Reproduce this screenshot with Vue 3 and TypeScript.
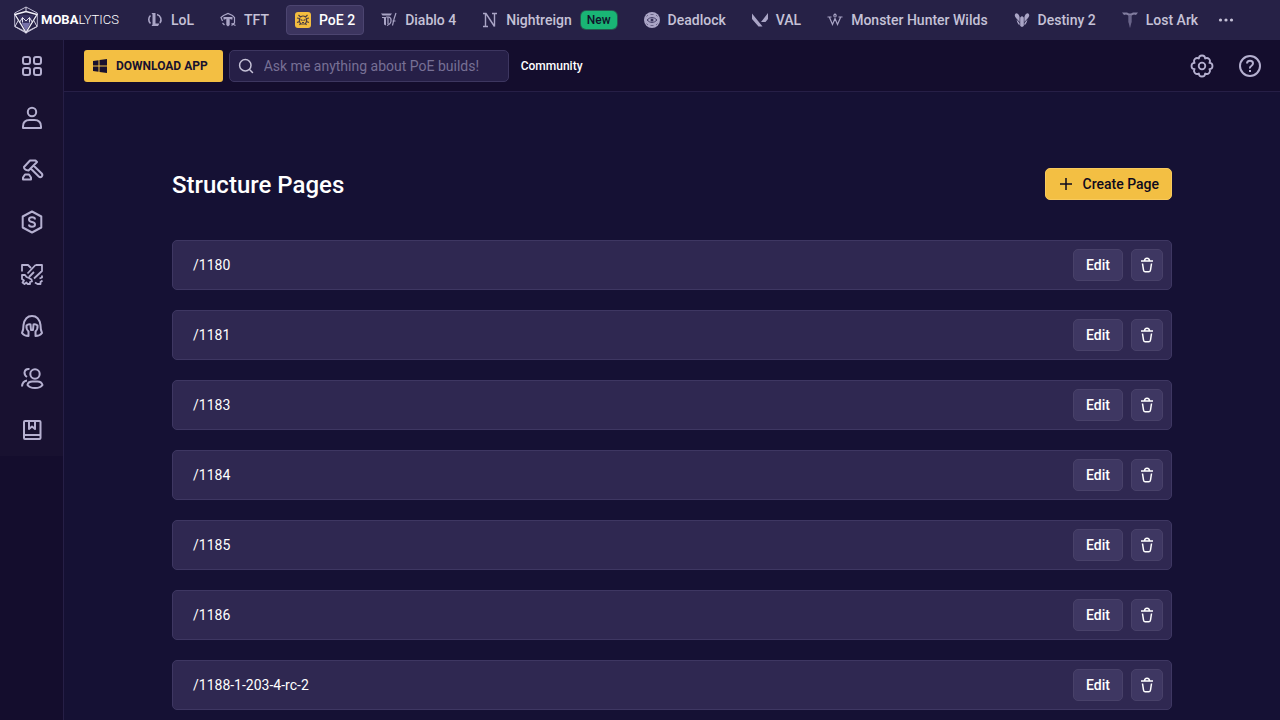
<script setup lang="ts">
import { ref } from 'vue'

interface Game {
  id: string
  name: string
  active?: boolean
  badge?: string
}

const games: Game[] = [
  { id: 'lol', name: 'LoL' },
  { id: 'tft', name: 'TFT' },
  { id: 'poe', name: 'PoE 2', active: true },
  { id: 'diablo', name: 'Diablo 4' },
  { id: 'night', name: 'Nightreign', badge: 'New' },
  { id: 'deadlock', name: 'Deadlock' },
  { id: 'val', name: 'VAL' },
  { id: 'mhw', name: 'Monster Hunter Wilds' },
  { id: 'destiny', name: 'Destiny 2' },
  { id: 'ark', name: 'Lost Ark' },
]

const sections: string[] = ['Dashboard', 'Profile', 'Builds', 'Currency', 'Gear', 'Classes', 'Community', 'Guides']

const pages: string[] = ['/1180', '/1181', '/1183', '/1184', '/1185', '/1186', '/1188-1-203-4-rc-2']

const query = ref('')
</script>

<template>
  <div class="app">
    <header class="games-bar">
      <a class="logo" href="#" aria-label="Mobalytics">
        <svg class="logo-mark" viewBox="0 0 26 28" aria-hidden="true">
          <path d="M5 9H21L13 25Z" fill="#37325f" />
          <path d="M8.500 17H17.500L13 25Z" fill="#7671a8" />
          <path d="M13 1 24.300 7V20.500L13 27 1.700 20.500V7Z" fill="none" stroke="#bbb7d0" stroke-width="1" />
          <path d="M2 8.500 13 5.500 24 8.500 13 26.500Z" fill="none" stroke="#f4f3fa" stroke-width="1.300" />
          <path d="M13 1V5.500M2 20.500 5.500 14M24 20.500 20.500 14M2 20.500 13 26M24 20.500 13 26" fill="none" stroke="#d9d7e6" stroke-width="1" />
          <path d="M9.500 16.500V11.500L13 15 16.500 11.500V16.500M6.500 16.500 9.500 11.500M19.500 16.500 16.500 11.500" fill="none" stroke="#dfddec" stroke-width="1" />
        </svg>
        <span class="wordmark"><b>MOBA</b>LYTICS</span>
      </a>
      <nav class="games" aria-label="Games">
        <a v-for="g in games" :key="g.id" href="#" class="game" :class="{ active: g.active }">
          <svg class="game-icon" viewBox="0 0 16 16" fill="none" stroke="currentColor" aria-hidden="true">
            <g v-if="g.id === 'lol'">
              <path d="M4.500 1H8.500V11.500H12.500L11 14H4.500L5.500 12.500V2.500Z" fill="currentColor" stroke="none" />
              <path d="M10 2.500A5.500 5.500 0 0 1 13 11M3.500 3.500A5.500 5.500 0 0 0 3.500 11.500" stroke-width="1.600" />
            </g>
            <g v-else-if="g.id === 'tft'">
              <path d="M3.500 5H12.500V7.500H11L9.700 6.800V13L8 14.500 6.300 13V6.800L5 7.500H3.500Z" fill="currentColor" stroke="none" />
              <path d="M2.500 9 1 5.500 3.500 3.500 8 1.500 12.500 3.500 14.500 5.500V11L11.500 13.500M4.500 13 2.500 11M11.500 11.500 15.500 13.500" stroke-width="1.200" />
            </g>
            <g v-else-if="g.id === 'poe'">
              <rect width="16" height="16" rx="3" fill="#f4bd3f" stroke="none" />
              <g stroke="#4a3c43" stroke-width="1.200">
                <path d="M5.500 5Q8 3 10.500 5L12.500 3M5.500 5 3.500 3M4.500 6.500 2 6M11.500 6.500 14 6M4.500 9.500 2 10.500M11.500 9.500 14 10.500M5.500 11.500 4.500 13M10.500 11.500 11.500 13M4.800 6Q3.500 9.500 6 12H10Q12.500 9.500 11.200 6" />
                <path d="M5.500 7.500 7.500 8.500M10.500 7.500 8.500 8.500M7 10.500H9" />
              </g>
            </g>
            <g v-else-if="g.id === 'diablo'">
              <path d="M0 1.500H11L9.500 3.500H1.500ZM2.500 5H5V13.500L3 12.500V7Z" fill="currentColor" stroke="none" />
              <path d="M5 5H8Q10.500 6 10 9Q9.800 12 6 13.500M7 5V12M15 1Q13 6 11.500 13.500M1 5.500H4M11.500 9H14.500" stroke-width="1.200" />
            </g>
            <g v-else-if="g.id === 'night'">
              <path d="M1 1.500H4L12.500 14.500M3.500 2V14M12.500 2V14.500M10 1.500H15M1 14.500H6" stroke-width="1.400" />
            </g>
            <g v-else-if="g.id === 'deadlock'">
              <circle cx="8" cy="8" r="8" fill="currentColor" stroke="none" />
              <path d="M3 8Q8 3 13 8Q8 13 3 8Z" stroke="#443e66" />
              <circle cx="8" cy="8" r="1.500" fill="#373158" stroke="none" />
              <path d="M6.500 2.500H9.500M6.500 13.500H9.500M2.500 4.500 4 3M13.500 4.500 12 3M2.500 11.500 4 13M13.500 11.500 12 13" stroke="#6b6589" />
            </g>
            <g v-else-if="g.id === 'val'" fill="currentColor" stroke="none">
              <path d="M0 1.500 10.500 14.500H6.500L0 7ZM16 1V7L13.500 10H9Z" />
            </g>
            <g v-else-if="g.id === 'mhw'">
              <path d="M0.500 5H4.500M11.500 5H15.500M2.500 5.500 5.500 12.500 8 6.500 10.500 12.500 13.500 5.500M7.500 5Q6 3.200 8 2Q10 3.200 8.500 5" stroke-width="1.200" />
            </g>
            <g v-else-if="g.id === 'destiny'" fill="currentColor" stroke="none">
              <path d="M2 1.200Q-0.500 3 2 6L5.600 10V5Q4.800 1.500 2 1.200ZM14 1.200Q16.500 3 14 6L10.400 10V5Q11.200 1.500 14 1.200ZM6.200 5.500 8 4 9.800 5.500V14L8 15 6.200 14ZM2.500 7.500 5.600 11V13.300Q3.500 12 2.500 7.500ZM13.500 7.500 10.400 11V13.300Q12.500 12 13.500 7.500Z" />
            </g>
            <g v-else>
              <path d="M0 0.500H5L7 1.500H9L11 0.500H16L14 3 12 2.500 9.500 3.500V10L8 16 6.500 10V3.500L4 2.500 2 3Z" fill="currentColor" stroke="none" opacity="0.700" />
              <path d="M8 3V15" stroke="#3d3860" stroke-width="0.700" />
            </g>
          </svg>
          <span>{{ g.name }}</span>
          <span v-if="g.badge" class="badge">{{ g.badge }}</span>
        </a>
        <button class="more" type="button" aria-label="More games">
          <svg viewBox="0 0 16 16" fill="currentColor" aria-hidden="true">
            <circle cx="2.500" cy="8" r="1.600" /><circle cx="8" cy="8" r="1.600" /><circle cx="13.500" cy="8" r="1.600" />
          </svg>
        </button>
      </nav>
    </header>

    <div class="body">
      <aside class="sidebar">
        <nav class="sections" aria-label="Sections">
          <a v-for="s in sections" :key="s" href="#" class="section" :aria-label="s">
            <svg viewBox="0 0 24 24" fill="none" stroke="currentColor" stroke-width="2" stroke-linejoin="round" aria-hidden="true">
              <g v-if="s === 'Dashboard'">
                <rect x="3" y="3" width="7" height="7" rx="2" /><rect x="14" y="3" width="7" height="7" rx="2" />
                <rect x="3" y="14" width="7" height="7" rx="2" /><rect x="14" y="14" width="7" height="7" rx="2" />
              </g>
              <g v-else-if="s === 'Profile'">
                <circle cx="12" cy="6" r="4.200" />
                <path d="M3 22V20.500Q3 14 9.500 14H14.500Q21 14 21 20.500V22Z" />
              </g>
              <g v-else-if="s === 'Builds'">
                <path d="M4 9 10 2.500H15.500L17 4 8.500 12.500Q4 12 4 9ZM13.500 7.500 21.700 15.500Q23 17 21.700 18.500Q20.300 20 18.800 18.500L11 10.800M3 21.500V19.500L5 16.500H9L11 19.500V21.500Z" />
              </g>
              <g v-else-if="s === 'Currency'">
                <path d="M12 1.500 21.300 6.500V17.500L12 22.500 2.700 17.500V6.500Z" />
                <path d="M15 9.500Q15 7.300 12 7.300T9 9.500Q9 11.500 12 12T15 14.500Q15 16.700 12 16.700T9 14.500" />
              </g>
              <g v-else-if="s === 'Gear'" stroke-width="1.800">
                <path d="M2 9.500V3H8L11 6M15.500 3H22V9L14 16.500M15.500 3 7.500 11.500M14 10 9 15M2 13H5L6.500 15 9 16 11.500 17.500 12 19.500 10 20V22H7.500L6.500 20.500 4.500 22 2.500 20.500 4 18.500 2 17ZM22 13.500V15.500L19.500 16.500M22.500 18.500 20.500 20V22H17.500L15 20.500" />
              </g>
              <g v-else-if="s === 'Classes'">
                <path d="M2 19Q3.500 16 3.500 11Q5 2 12 2T20.500 11Q20.500 16 22 19Q20 22 15.500 22V17.500Q18 15 17.500 11.500Q15.500 9.500 13.500 10.500L13 16H11L10.500 10.500Q8.500 9.500 6.500 11.500Q6 15 8.500 17.500V22Q4 22 2 19Z" />
              </g>
              <g v-else-if="s === 'Community'">
                <circle cx="15" cy="8" r="4.700" />
                <path d="M7.500 19Q8 15.500 12.500 15.500H17.500Q21.500 15.500 22.500 19Q20.500 22 15 22T7.500 19ZM9.500 3Q5 2.500 4.500 6.500Q4.500 9.500 7 11M7 14.500Q2.500 15 2 20.500" />
              </g>
              <g v-else>
                <rect x="4" y="3" width="16.500" height="18" rx="1" />
                <path d="M4 17H20.500M9 3V11L12 8.500 15 11V3" />
              </g>
            </svg>
          </a>
        </nav>
      </aside>

      <div class="content">
        <div class="toolbar">
          <button class="download" type="button">
            <svg viewBox="0 0 14 14" fill="currentColor" aria-hidden="true">
              <path d="M0 2 5.500 1.200V6.500H0ZM6.500 1 14 0V6.500H6.500ZM0 7.500H5.500V12.800L0 12ZM6.500 7.500H14V14L6.500 13Z" />
            </svg>
            <span>DOWNLOAD APP</span>
          </button>
          <label class="search">
            <svg viewBox="0 0 16 16" fill="none" stroke="currentColor" stroke-width="1.500" stroke-linecap="round" aria-hidden="true">
              <circle cx="7.300" cy="7.300" r="5.700" /><path d="M11.500 11.500 14.500 14.500" />
            </svg>
            <input v-model="query" type="text" aria-label="Search" placeholder="Ask me anything about PoE builds!" />
          </label>
          <a class="community" href="#">Community</a>
          <div class="tools">
            <button class="tool" type="button" aria-label="Settings">
              <svg viewBox="0 0 24 24" fill="none" stroke="currentColor" stroke-width="1.800" stroke-linejoin="round" aria-hidden="true">
                <path d="M8.900 4.600A3.100 3.100 0 0 1 15.100 4.600A3.100 3.100 0 0 1 19.400 8.900A3.100 3.100 0 0 1 19.400 15.100A3.100 3.100 0 0 1 15.100 19.400A3.100 3.100 0 0 1 8.900 19.400A3.100 3.100 0 0 1 4.600 15.100A3.100 3.100 0 0 1 4.600 8.900A3.100 3.100 0 0 1 8.900 4.600Z" />
                <circle cx="12" cy="12" r="3.300" />
              </svg>
            </button>
            <button class="tool" type="button" aria-label="Help">
              <svg viewBox="0 0 24 24" fill="none" stroke="currentColor" stroke-width="2" aria-hidden="true">
                <circle cx="12" cy="12" r="10" />
                <path d="M9 9.500Q9 6.700 12 6.700T15 9.300Q15 11 13.300 12T12 14.500M12 16V18" />
              </svg>
            </button>
          </div>
        </div>

        <main class="main">
          <div class="container">
            <div class="heading">
              <h1>Structure Pages</h1>
              <button class="create" type="button">
                <svg viewBox="0 0 16 16" fill="none" stroke="currentColor" stroke-width="1.500" aria-hidden="true">
                  <path d="M8 2V14M2 8H14" />
                </svg>
                <span>Create Page</span>
              </button>
            </div>
            <ul class="pages">
              <li v-for="p in pages" :key="p" class="page">
                <span class="path">{{ p }}</span>
                <button class="btn edit" type="button">Edit</button>
                <button class="btn remove" type="button" :aria-label="`Delete ${p}`">
                  <svg viewBox="0 0 16 16" fill="none" stroke="currentColor" stroke-width="1.500" stroke-linejoin="round" aria-hidden="true">
                    <path d="M2 4H14M5.500 4Q5.500 1.200 8 1.200T10.500 4M3.500 6.500 4.500 13Q4.700 14.800 6 14.800H10Q11.300 14.800 11.500 13L12.500 6.500" />
                  </svg>
                </button>
              </li>
            </ul>
          </div>
        </main>
      </div>
    </div>
  </div>
</template>

<style>
body {
  margin: 0;
  background: #151134;
}
</style>

<style scoped>
.app {
  min-height: 100vh;
  display: flex;
  flex-direction: column;
  font-family: Roboto, "Liberation Sans", sans-serif;
  font-size: 14px;
  line-height: 20px;
  color: #fff;
}
.app *, .app { box-sizing: border-box; }
a { color: inherit; text-decoration: none; }
button, input { font: inherit; color: inherit; }
button { cursor: pointer; }
svg { display: block; flex: none; }

.games-bar {
  height: 40px;
  display: flex;
  align-items: center;
  padding-left: 13px;
  background: #262146;
}
.logo {
  display: flex;
  align-items: center;
  width: 125px;
  flex: none;
}
.logo-mark { width: 26px; height: 28px; }
.wordmark { margin-left: 2px; font-size: 13px; font-weight: 300; }
.wordmark b { font-weight: 700; }
.games { display: flex; align-items: center; gap: 8px; color: #c5c1d7; }
.game {
  height: 30px;
  display: flex;
  align-items: center;
  gap: 8px;
  padding: 0 8px;
  border: 1px solid transparent;
  border-radius: 4px;
  font-weight: 500;
  white-space: nowrap;
}
.game.active { background: #3c355f; border-color: #4c4570; color: #fff; }
.game-icon { width: 16px; height: 16px; color: #aaa5c6; }
.badge {
  margin: 0 1px;
  padding: 0 6px;
  border-radius: 5px;
  background: #19b575;
  box-shadow: 0 0 0 1px #24594f;
  color: #10122b;
  font-size: 12px;
  line-height: 18px;
}
.more {
  display: flex;
  padding: 0;
  margin-left: 3px;
  border: 0;
  background: none;
}
.more svg { width: 16px; height: 16px; }

.body { flex: 1; display: flex; }
.sidebar {
  width: 64px;
  flex: none;
  border-right: 1px solid #261f46;
  background: #140d2d;
}
.sections { background: #181130; }
.section {
  height: 52px;
  display: flex;
  align-items: center;
  justify-content: center;
  color: #b5b0d0;
}
.section svg { width: 24px; height: 24px; }

.content { flex: 1; min-width: 0; display: flex; flex-direction: column; }
.toolbar {
  height: 52px;
  display: flex;
  align-items: center;
  padding: 0 18px 0 20px;
  border-bottom: 1px solid #261f46;
  background: #140d2d;
}
.download {
  height: 32px;
  display: flex;
  align-items: center;
  gap: 9px;
  padding: 0 15px 0 9px;
  border: 0;
  border-radius: 3px;
  background: #f3bf43;
  color: #17112f;
  font-size: 12px;
  font-weight: 700;
  white-space: nowrap;
}
.download svg { width: 14px; height: 14px; }
.search {
  width: 280px;
  height: 32px;
  display: flex;
  align-items: center;
  gap: 10px;
  margin-left: 6px;
  padding: 0 8px;
  border: 1px solid #3d3660;
  border-radius: 5px;
  background: #261f47;
  color: #c5c1d7;
}
.search svg { width: 16px; height: 16px; }
.search input {
  flex: 1;
  min-width: 0;
  padding: 0;
  border: 0;
  outline: 0;
  background: none;
}
.search input::placeholder { color: #777095; opacity: 1; }
.community { margin-left: 12px; font-size: 12px; font-weight: 500; }
.tools { display: flex; gap: 24px; margin-left: auto; }
.tool { padding: 0; border: 0; background: none; color: #b5b0d0; }
.tool svg { width: 24px; height: 24px; }

.main { flex: 1; padding: 76px 24px 10px; background: #151134; }
.container { max-width: 1000px; margin: 0 auto; }
.heading { height: 32px; display: flex; align-items: flex-start; justify-content: space-between; }
h1 { margin: 0; font-size: 24px; line-height: 34px; font-weight: 500; }
.create {
  height: 32px;
  display: flex;
  align-items: center;
  gap: 9px;
  padding: 0 12px;
  border: 1px solid #f8ca5d;
  border-radius: 5px;
  background: #f3bf43;
  color: #0d0a1e;
  font-weight: 500;
}
.create svg { width: 16px; height: 16px; }
.pages {
  display: flex;
  flex-direction: column;
  gap: 20px;
  margin: 40px 0 0;
  padding: 0;
  list-style: none;
}
.page {
  height: 50px;
  display: flex;
  align-items: center;
  gap: 8px;
  padding: 0 8px 0 20px;
  border: 1px solid #3e3762;
  border-radius: 5px;
  background: #2f2851;
}
.path { flex: 1; }
.btn {
  height: 32px;
  display: flex;
  align-items: center;
  justify-content: center;
  padding: 0;
  border: 1px solid #484169;
  border-radius: 5px;
  background: #3e3762;
  font-weight: 500;
}
.edit { width: 50px; }
.remove { width: 32px; }
.remove svg { width: 16px; height: 16px; }
</style>
